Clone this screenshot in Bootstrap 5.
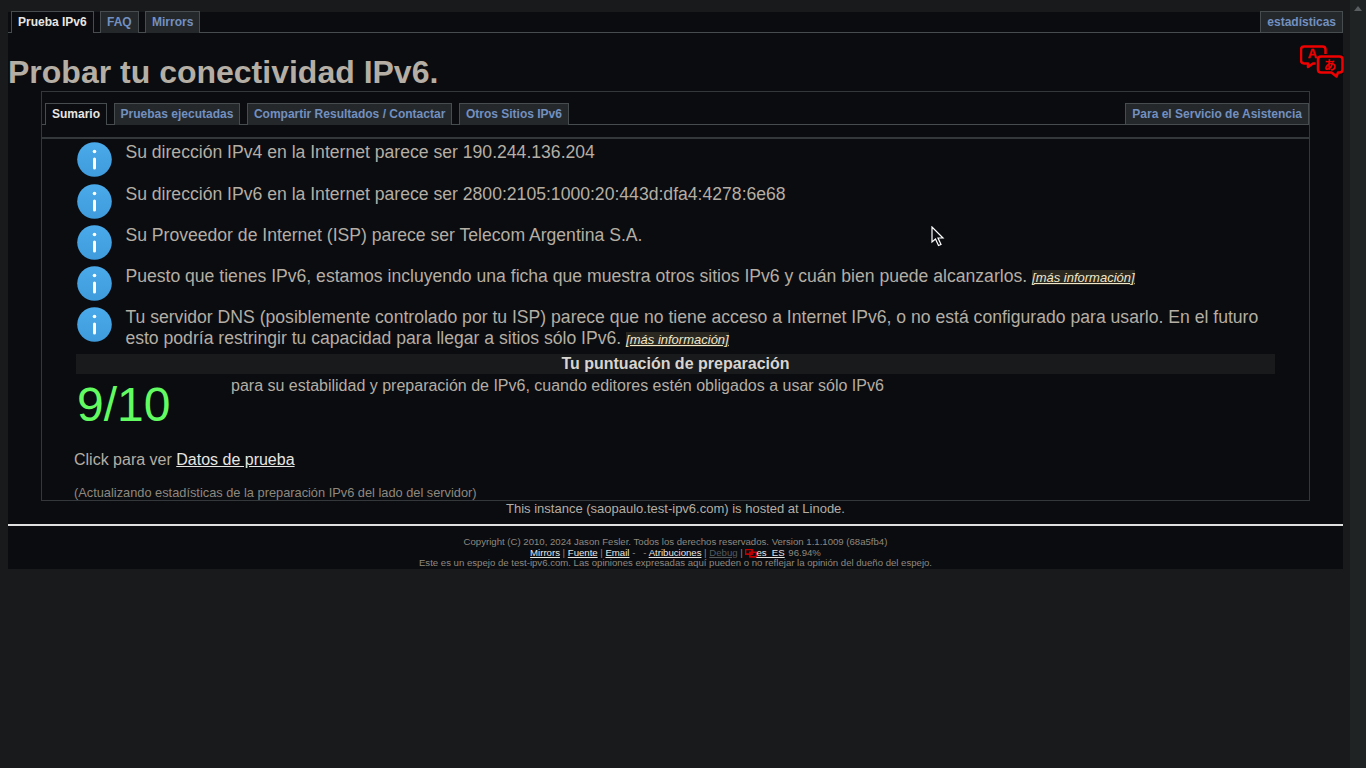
<!DOCTYPE html>
<html lang="es">
<head>
  <meta charset="UTF-8" />
  <meta name="viewport" content="width=device-width, initial-scale=1" />
  <title>Probar tu conectividad IPv6.</title>
  <link href="https://cdn.jsdelivr.net/npm/bootstrap@5.3.0/dist/css/bootstrap.min.css" rel="stylesheet" />
  <style>
    html, body { height: 100%; overflow: hidden; }
    body {
      background-color: #181a1b;
      color: #b5aea4;
      font-family: "Liberation Sans", Arial, sans-serif;
      font-size: 16px;
      line-height: normal;
    }
    a { color: #e8e6e3; }
    .scroll-track { width: 16px; background: #202324; flex: none; position: relative; }
    .scroll-track::before {
      content: ""; position: absolute; left: 4px; top: 6px;
      border: 4px solid transparent; border-top: 0; border-bottom: 5px solid #5a5f62;
    }
    .page-wrap { flex: 1; padding: 12px 7px 0 8px; min-width: 0; }
    .sheet { background: #0a0c10; position: relative; }
    .tabbar {
      display: flex; gap: 6.3px; border-bottom: 1px solid #474c4f; padding: 0 0 0 3px; height: 21px;
      font-size: 12px; font-weight: 700;
    }
    .tabbar a {
      display: block; height: 21px; padding: 0 6px; line-height: 20px; margin-top: -1px; box-sizing: content-box;
      background: #25282a; color: #7290c0; text-decoration: none;
      border: 1px solid #474c4f; border-bottom: 0;
    }
    .tabbar a.on { background: #0a0c10; color: #e8e6e3; height: 21px; }
    .tabbar a.push { margin-left: auto; border-bottom: 1px solid #474c4f; height: 20px; }
    .page-title { font-size: 32px; font-weight: 700; margin: 21px 0 0; line-height: 37px; color: #b5aea4; }
    .lang-icon { position: absolute; right: -1px; top: 33px; }
    .inner-box {
      margin: 0 33px; border: 1px solid #34383a; padding-top: 12px; height: 410px;
    }
    .inner-box .tabbar { height: 21px; gap: 6.6px; }
    .thick-rule { border-top: 2px solid #34383a; margin-top: 12px; }
    .msg-list { padding: 3.4px 0 3.8px 35px; margin-right: 20px; }
    .msg-row { display: flex; gap: 13.4px; min-height: 41.2px; font-size: 17.6px; line-height: 21px; }
    .msg-row svg { flex: none; }
    .more-link { font-size: 13px; font-style: italic; background: #2a2720; color: #f0e6c8; }
    .score-head { background: #181a1b; color: #d8d4cf; font-weight: 700; text-align: center; height: 20px; line-height: 20px; margin: 0 34px 0 34px; font-size: 16px; }
    .score-row { display: flex; margin-left: 35px; height: 76px; }
    .score-num { width: 154px; font-size: 48px; color: #62fb62; line-height: 62px; }
    .score-txt { line-height: 24px; color: #b5aea4; }
    .test-data { margin: 0 0 0 32px; height: 35px; line-height: 20px; }
    .update-note { margin-left: 32px; font-size: 12.8px; color: #8f887e; line-height: 15px; }
    .hosted { text-align: center; font-size: 13px; line-height: 16px; }
    .foot-rule { border-top: 2px solid #e0e0e0; margin-top: 7px; }
    .foot-text { text-align: center; font-size: 9.6px; color: #8f887e; line-height: 10.5px; padding: 11px 0 0; height: 43px; }
    .foot-text a { color: #e8e6e3; }
    .foot-text a.dim { color: #565b5e; }
    .foot-icon { vertical-align: 1px; margin-block: -3px; margin-right: -1px; }
    .pct { margin-left: 1px; }
    .pointer { position: absolute; left: 931px; top: 226px; }
  </style>
</head>
<body class="d-flex">
  <div class="page-wrap">
    <div class="sheet">
      <div class="tabbar">
        <a class="on" href="#">Prueba IPv6</a>
        <a href="#">FAQ</a>
        <a href="#">Mirrors</a>
        <a class="push" href="#">estadísticas</a>
      </div>
      <svg class="lang-icon" width="44" height="33" viewBox="0 0 44 33" fill="none" stroke="#f00000" stroke-width="2.500" stroke-linejoin="round">
        <path d="M4 1.500h18.500q3 0 3 3v11q0 3-3 3H13l-5 3.500v-3.500H4q-3 0-3-3v-11q0-3 3-3z" fill="#0a0c10"/>
        <path d="M21 11.500h18.500q3 0 3 3v10q0 3-3 3H38l-1.500 4-5-4H21q-3 0-3-3v-10q0-3 3-3z" fill="#0a0c10" stroke="#0a0c10" stroke-width="5"/>
        <path d="M21 11.500h18.500q3 0 3 3v10q0 3-3 3H38l-1.500 4-5-4H21q-3 0-3-3v-10q0-3 3-3z"/>
        <text x="12.500" y="13" text-anchor="middle" font-family="Liberation Sans" font-weight="700" font-size="13" fill="#f00000" stroke="#f00000" stroke-width="0.300">A</text>
        <text x="30" y="24.500" text-anchor="middle" font-family="Noto Sans CJK JP" font-weight="700" font-size="12.500" fill="#f00000" stroke="none">あ</text>
      </svg>
      <h1 class="page-title">Probar tu conectividad IPv6.</h1>
      <div class="inner-box">
        <div class="tabbar">
          <a class="on" href="#">Sumario</a>
          <a href="#">Pruebas ejecutadas</a>
          <a href="#">Compartir Resultados / Contactar</a>
          <a href="#">Otros Sitios IPv6</a>
          <a class="push" href="#">Para el Servicio de Asistencia</a>
        </div>
        <div class="thick-rule"></div>
        <div class="msg-list" id="msgs"></div>
        <div class="score-head">Tu puntuación de preparación</div>
        <div class="score-row">
          <div class="score-num">9/10</div>
          <div class="score-txt">para su estabilidad y preparación de IPv6, cuando editores estén obligados a usar sólo IPv6</div>
        </div>
        <div class="test-data">Click para ver <a href="#">Datos de prueba</a></div>
        <div class="update-note">(Actualizando estadísticas de la preparación IPv6 del lado del servidor)</div>
      </div>
      <div class="hosted">This instance (saopaulo.test-ipv6.com) is hosted at Linode.</div>
      <div class="foot-rule"></div>
      <div class="foot-text">
        <div>Copyright (C) 2010, 2024 Jason Fesler. Todos los derechos reservados. Version 1.1.1009 (68a5fb4)</div>
        <div><a href="#">Mirrors</a> | <a href="#">Fuente</a> | <a href="#">Email</a> - &nbsp; - <a href="#">Atribuciones</a> | <a class="dim" href="#">Debug</a> | <svg class="foot-icon" width="12" height="9" viewBox="0 0 44 33" fill="none" stroke="#c00000" stroke-width="6"><path d="M2 2h24v17H2zM18 12h24v17H18z"/></svg><a href="#">es_ES</a> <span class="pct">96.94%</span></div>
        <div>Este es un espejo de test-ipv6.com. Las opiniones expresadas aquí pueden o no reflejar la opinión del dueño del espejo.</div>
      </div>
    </div>
  </div>
  <div class="scroll-track"></div>
  <svg class="pointer" width="14" height="21" viewBox="0 0 14 21">
    <path d="M1 1v15l3.500-3 3 6.500 2.500-1-3-6.500h5z" fill="#0a0c10" stroke="#fff" stroke-width="1.200"/>
  </svg>
  <script>
    const info = '<svg width="35" height="35" viewBox="0 0 35 35"><defs><linearGradient id="ig" x1="0" y1="0" x2="0" y2="1"><stop offset="0" stop-color="#4aaaea"/><stop offset="1" stop-color="#3f9bdc"/></linearGradient></defs><circle cx="17.500" cy="17.500" r="17.300" fill="url(#ig)"/><circle cx="17.500" cy="9.500" r="1.800" fill="#fff"/><rect x="16" y="15.500" width="3" height="12" rx="1.500" fill="#fff"/></svg>';
    const more = '<a class="more-link" href="#">[más información]</a>';
    const msgs = [
      'Su dirección IPv4 en la Internet parece ser 190.244.136.204',
      'Su dirección IPv6 en la Internet parece ser 2800:2105:1000:20:443d:dfa4:4278:6e68',
      'Su Proveedor de Internet (ISP) parece ser Telecom Argentina S.A.',
      'Puesto que tienes IPv6, estamos incluyendo una ficha que muestra otros sitios IPv6 y cuán bien puede alcanzarlos. ' + more,
      'Tu servidor DNS (posiblemente controlado por tu ISP) parece que no tiene acceso a Internet IPv6, o no está configurado para usarlo. En el futuro esto podría restringir tu capacidad para llegar a sitios sólo IPv6. ' + more
    ];
    document.getElementById('msgs').innerHTML = msgs.map(m => `<div class="msg-row">${info}<div class="txt">${m}</div></div>`).join('');
  </script>
</body>
</html>
